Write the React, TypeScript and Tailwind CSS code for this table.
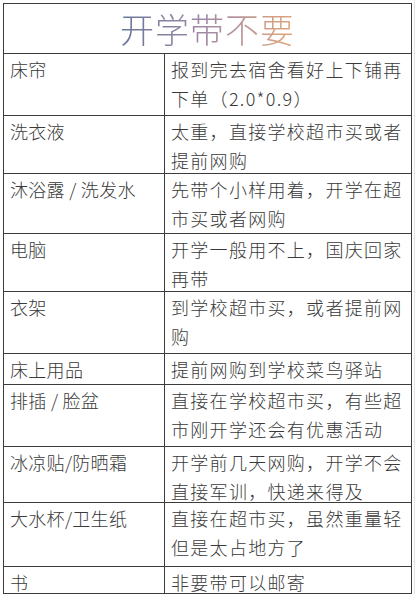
const rows: { item: string; lines: string[]; h: number }[] = [
  { item: "床帘", lines: ["报到完去宿舍看好上下铺再", "下单（2.0*0.9）"], h: 62 },
  { item: "洗衣液", lines: ["太重，直接学校超市买或者", "提前网购"], h: 58 },
  { item: "沐浴露 / 洗发水", lines: ["先带个小样用着，开学在超", "市买或者网购"], h: 60 },
  { item: "电脑", lines: ["开学一般用不上，国庆回家", "再带"], h: 58 },
  { item: "衣架", lines: ["到学校超市买，或者提前网", "购"], h: 62 },
  { item: "床上用品", lines: ["提前网购到学校菜鸟驿站"], h: 31 },
  { item: "排插 / 脸盆", lines: ["直接在学校超市买，有些超", "市刚开学还会有优惠活动"], h: 62 },
  { item: "冰凉贴/防晒霜", lines: ["开学前几天网购，开学不会", "直接军训，快递来得及"], h: 56 },
  { item: "大水杯/卫生纸", lines: ["直接在超市买，虽然重量轻", "但是太占地方了"], h: 64 },
  { item: "书", lines: ["非要带可以邮寄"], h: 26 },
];

export default function App() {
  return (
    <div
      className="relative w-[417px] h-[594px] bg-white pt-[3px] pl-[3px] overflow-hidden"
      style={{ fontFamily: '"Noto Sans CJK SC", "Noto Sans", sans-serif' }}
    >
      {/* faint scan edge on the right */}
      <div className="absolute top-0 right-[2px] h-[594px] w-px bg-[#e4e4e4]" />

      <div className="w-[409px] border-[1.5px] border-[#3c3c3c]">
        {/* title */}
        <div className="flex h-[50px] items-center justify-center border-b-[1.5px] border-[#3c3c3c]">
          <span className="bg-gradient-to-r from-[#66779a] via-[#a38aa6] to-[#e2a676] bg-clip-text text-[34px] font-light tracking-[1px] text-transparent">
            开学带不要
          </span>
        </div>

        {rows.map((r, i) => (
          <div
            key={r.item}
            className={
              "grid grid-cols-[161px_1fr] " +
              (i < rows.length - 1 ? "border-b-[1.5px] border-[#3c3c3c]" : "")
            }
            style={{ height: r.h }}
          >
            <div className="border-r-[1.5px] border-[#3c3c3c] pl-[6px] pt-[1px] text-[18px] leading-[29px] tracking-[0.3px] font-light text-[#3a3a3a] whitespace-nowrap">
              {r.item}
            </div>
            <div className="pl-[6px] pt-[1px] text-[18px] leading-[29px] tracking-[1.3px] font-light text-[#3a3a3a]">
              {r.lines.map((l) => (
                <div key={l} className="whitespace-nowrap">
                  {l}
                </div>
              ))}
            </div>
          </div>
        ))}
      </div>
    </div>
  );
}
